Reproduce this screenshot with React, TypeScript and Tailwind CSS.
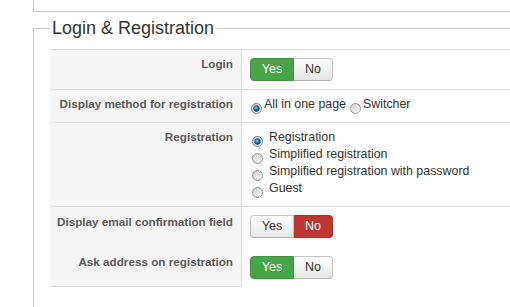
import React from "react";

function Radio({ checked }: { checked?: boolean }) {
  return (
    <svg width="11" height="11" viewBox="0 0 11 11" className="shrink-0">
      <defs>
        <linearGradient id="rg" x1="0" y1="0" x2="1" y2="1">
          <stop offset="0" stopColor="#cfcfcf" />
          <stop offset="1" stopColor="#fafafa" />
        </linearGradient>
        <radialGradient id="rb" cx="0.4" cy="0.35" r="0.7">
          <stop offset="0" stopColor="#8fd0f5" />
          <stop offset="0.45" stopColor="#2b7fc0" />
          <stop offset="1" stopColor="#0f3d6e" />
        </radialGradient>
      </defs>
      <circle cx="5.5" cy="5.5" r="5" fill="url(#rg)" stroke={checked ? "#6b7c8c" : "#959595"} strokeWidth="1" />
      {checked && <circle cx="5.5" cy="5.5" r="2.9" fill="url(#rb)" stroke="#0b2f57" strokeWidth="0.6" />}
    </svg>
  );
}

function YesNo({ value }: { value: "yes" | "no" }) {
  const base =
    "h-[23px] flex items-center justify-center text-[12.5px] leading-none border";
  const inactive =
    "bg-gradient-to-b from-white to-[#e6e6e6] text-[#333] border-[#c4c4c4] border-b-[#b0b0b0]";
  return (
    <div className="inline-flex">
      <div
        className={`${base} w-[44px] rounded-l-[4px] ${
          value === "yes" ? "bg-[#46a546] text-white border-[#3e923e]" : inactive
        }`}
      >
        Yes
      </div>
      <div
        className={`${base} w-[39px] rounded-r-[4px] border-l-0 ${
          value === "no" ? "bg-[#bd362f] text-white border-[#a8302a]" : inactive
        }`}
      >
        No
      </div>
    </div>
  );
}

const labelCls =
  "w-[192px] shrink-0 bg-[#f4f4f4] border-r border-[#ddd] text-right pr-[8px] font-bold text-[11.7px] leading-[18px] text-[#5a5a5a]";

export default function App() {
  return (
    <div className="w-[510px] h-[307px] overflow-hidden bg-white font-['Liberation_Sans',Arial,sans-serif] text-[#333]">
      <div className="ml-[33px] h-[12px] border-l border-b border-[#ccc]" />
      <fieldset className="ml-[33px] mt-[6px] border-l border-t border-[#ccc] pl-[16px] pb-[40px]">
        <legend className="px-[2px] text-[18px] leading-[20px] text-[#333]">
          Login &amp; Registration
        </legend>
        <div className="mt-[11px] text-[12.4px]">
          {/* Login */}
          <div className="flex h-[40px] border-t border-[#ddd]">
            <div className={`${labelCls} pt-[5px]`}>Login</div>
            <div className="pl-[8px] pt-[8px]">
              <YesNo value="yes" />
            </div>
          </div>
          {/* Display method */}
          <div className="flex h-[33px] border-t border-[#ddd]">
            <div className={`${labelCls} pt-[5px]`}>Display method for registration</div>
            <div className="pl-[9px] pt-[5px] flex items-start leading-[18px]">
              <div className="flex items-start">
                <span className="mt-[8px]">
                  <Radio checked />
                </span>
                <span className="ml-[2px]">All in one page</span>
              </div>
              <div className="flex items-start ml-[4px]">
                <span className="mt-[8px]">
                  <Radio />
                </span>
                <span className="ml-[2px]">Switcher</span>
              </div>
            </div>
          </div>
          {/* Registration */}
          <div className="flex h-[84px] border-t border-[#ddd]">
            <div className={`${labelCls} pt-[5px]`}>Registration</div>
            <div className="pl-[10px] pt-[6px] flex flex-col">
              {[
                ["Registration", true],
                ["Simplified registration", false],
                ["Simplified registration with password", false],
                ["Guest", false],
              ].map(([t, c]) => (
                <div key={t as string} className="flex items-start h-[17px] leading-[17px]">
                  <span className="mt-[7px]">
                    <Radio checked={c as boolean} />
                  </span>
                  <span className="ml-[6px]">{t as string}</span>
                </div>
              ))}
            </div>
          </div>
          {/* Email confirmation */}
          <div className="flex h-[40px] border-t border-[#ddd]">
            <div className={`${labelCls} pt-[6px]`}>Display email confirmation field</div>
            <div className="pl-[8px] pt-[8px]">
              <YesNo value="no" />
            </div>
          </div>
          {/* Ask address */}
          <div className="flex h-[41px]">
            <div className={`${labelCls} pt-[7px] border-b`}>Ask address on registration</div>
            <div className="pl-[8px] pt-[10px]">
              <YesNo value="yes" />
            </div>
          </div>
        </div>
      </fieldset>
    </div>
  );
}
